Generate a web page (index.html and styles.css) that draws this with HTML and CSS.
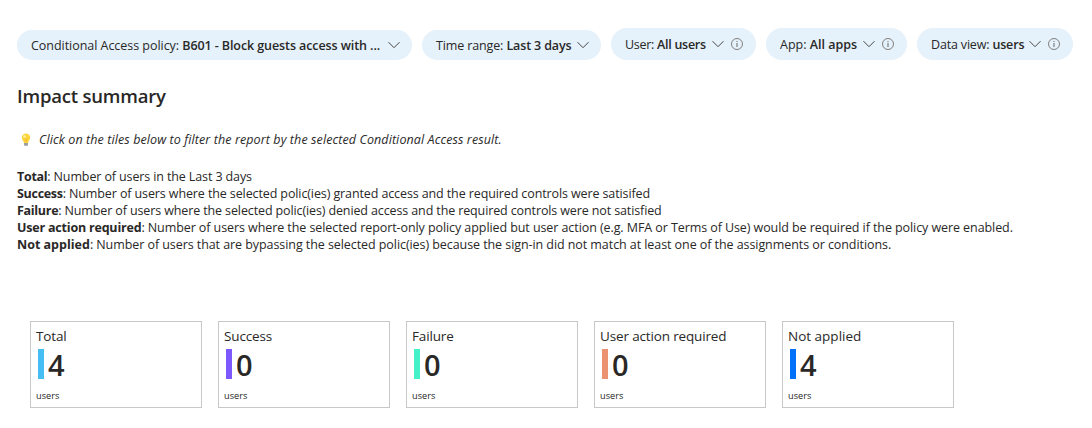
FILE: index.html
```html
<!DOCTYPE html>
<html lang="en">
<head>
<meta charset="utf-8">
<title>Impact summary</title>
<link rel="stylesheet" href="styles.css">
</head>
<body>
<svg class="defs" width="0" height="0">
  <symbol id="chevron" viewBox="0 0 12 8"><path d="M.5 1.200 6 6.700l5.500-5.500" fill="none" stroke="#484644" stroke-width="1"/></symbol>
  <symbol id="info" viewBox="0 0 12 12"><circle cx="6" cy="6" r="5.500" fill="none" stroke="#767472" stroke-width=".9"/><path d="M6 5v4M6 3v1.100" fill="none" stroke="#767472" stroke-width="1.100"/></symbol>
</svg>
<nav class="filters">
  <div class="pill policy"><span class="label">Conditional Access policy: <b>B601 - Block guests access with ...</b></span><svg class="chevron"><use href="#chevron"/></svg></div>
  <div class="pill range"><span class="label">Time range: <b>Last 3 days</b></span><svg class="chevron"><use href="#chevron"/></svg></div>
  <div class="pill tall user"><span class="label">User: <b>All users</b></span><svg class="chevron"><use href="#chevron"/></svg><svg class="info"><use href="#info"/></svg></div>
  <div class="pill tall app"><span class="label">App: <b>All apps</b></span><svg class="chevron"><use href="#chevron"/></svg><svg class="info"><use href="#info"/></svg></div>
  <div class="pill tall view"><span class="label">Data view: <b>users</b></span><svg class="chevron"><use href="#chevron"/></svg><svg class="info"><use href="#info"/></svg></div>
</nav>
<h1 class="title">Impact summary</h1>
<p class="hint">
  <svg class="bulb" viewBox="0 0 10 14"><path d="M3 9.500h4v2.800q-2 1.400-4 0z" fill="#9aa0a6"/><path d="M5 .5a4.200 4.200 0 0 0-4.200 4.200c0 2.300 1.700 2.800 2.100 5.300h4.200c.4-2.500 2.100-3 2.100-5.300A4.200 4.200 0 0 0 5 .5z" fill="#fcd53f"/><path d="M4 5.500 5 9l1-3.500" fill="none" stroke="#f3ad2b" stroke-width=".6"/><circle cx="3.600" cy="3.500" r="1.300" fill="#fff2a0"/></svg>
  <em class="hint-text">Click on the tiles below to filter the report by the selected Conditional Access result.</em>
</p>
<div class="legend">
  <div class="line l1"><b>Total</b>: Number of users in the Last 3 days</div>
  <div class="line l2"><b>Success</b>: Number of users where the selected polic(ies) granted access and the required controls were satisifed</div>
  <div class="line l3"><b>Failure</b>: Number of users where the selected polic(ies) denied access and the required controls were not satisfied</div>
  <div class="line l4"><b>User action required</b>: Number of users where the selected report-only policy applied but user action (e.g. MFA or Terms of Use) would be required if the policy were enabled.</div>
  <div class="line l5"><b>Not applied</b>: Number of users that are bypassing the selected polic(ies) because the sign-in did not match at least one of the assignments or conditions.</div>
</div>
<main class="tiles">
  <section class="tile total"><div class="name">Total</div><div class="value">4</div><div class="unit">users</div></section>
  <section class="tile success"><div class="name">Success</div><div class="value">0</div><div class="unit">users</div></section>
  <section class="tile failure"><div class="name">Failure</div><div class="value">0</div><div class="unit">users</div></section>
  <section class="tile action"><div class="name">User action required</div><div class="value">0</div><div class="unit">users</div></section>
  <section class="tile skipped"><div class="name">Not applied</div><div class="value">4</div><div class="unit">users</div></section>
</main>
</body>
</html>
```
FILE: styles.css
```css
* { box-sizing: border-box; }
body { margin: 0; padding: 28px 17px 0; background: #fff; color: #292827; font: 12.5px/17px "Open Sans", "Noto Sans", sans-serif; white-space: nowrap; overflow: hidden; }
.defs { display: none; }
b { font-weight: 700; }
.filters { display: flex; align-items: flex-end; gap: 10px; height: 32px; }
.pill { display: flex; align-items: center; height: 30px; padding: 0 12px 0 14px; border-radius: 16px; background: #e5f1fb; }
.pill b { font-weight: 600; }
.tall { height: 32px; padding-right: 13px; }
.label { flex: 1; }
.policy { width: 395px; letter-spacing: -.04px; }
.policy b { letter-spacing: -.09px; }
.range { width: 179px; letter-spacing: -.13px; }
.user { width: 145px; letter-spacing: -.28px; }
.app { width: 141px; }
.view { width: 156px; letter-spacing: -.17px; }
.chevron { width: 12px; height: 8px; flex: none; }
.info { width: 12px; height: 12px; margin-left: 7px; flex: none; }
.title { margin: 23px 0 0; font-size: 18.5px; line-height: 25px; font-weight: 600; letter-spacing: -.2px; }
.hint { display: flex; align-items: center; margin: 23px 0 0; padding-left: 4px; height: 17px; letter-spacing: .1px; }
.bulb { width: 10px; height: 14px; margin-right: 8px; flex: none; }
.legend { margin-top: 20px; }
.l1 { letter-spacing: -.12px; }
.l2 { letter-spacing: -.11px; }
.l3 { letter-spacing: -.12px; }
.l4 { letter-spacing: -.08px; }
.l5 { letter-spacing: -.07px; }
.l1 b, .l2 b, .l3 b { letter-spacing: -.3px; }
.l4 b { letter-spacing: -.2px; }
.l5 b { letter-spacing: 0; }
.tiles { display: flex; gap: 16px; margin: 68px 0 0 13px; }
.tile { width: 172px; height: 87px; border: 1px solid #c8c8c8; padding: 5px 5px 0; }
.name { font-size: 13.5px; line-height: 18px; letter-spacing: -.15px; }
.skipped .name { letter-spacing: 0; }
.value { display: flex; gap: 4px; height: 30px; margin: 4px 0 0 2px; font-size: 29px; line-height: 32px; font-weight: 600; }
.value::before { content: ""; width: 6px; height: 30px; background: var(--bar); }
.unit { margin-top: 11px; font-size: 9.2px; line-height: 12px; }
.total { --bar: #47bdf5; }
.success { --bar: #7e58ff; }
.failure { --bar: #44f1c8; }
.action { --bar: #eb9371; }
.skipped { --bar: #0072f9; }
```
